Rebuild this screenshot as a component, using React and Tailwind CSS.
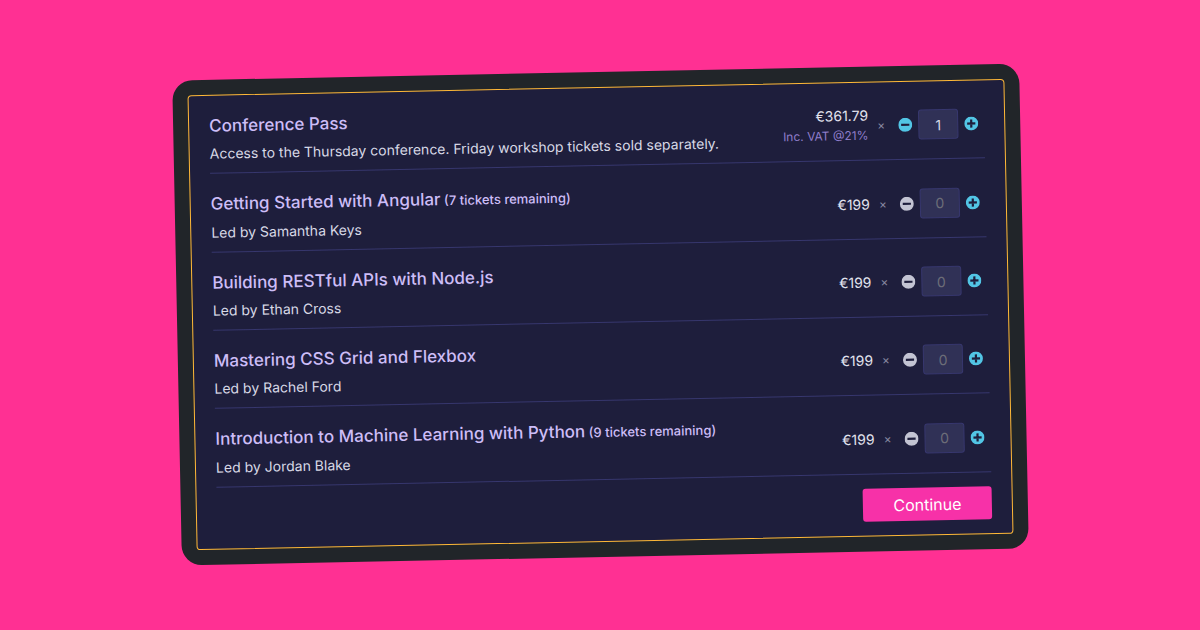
import { useState } from "react";

const TICKETS = [
  {
    id: "conference",
    name: "Conference Pass",
    details: "Access to the Thursday conference. Friday workshop tickets sold separately.",
    price: "€361.79",
    note: "Inc. VAT @21%",
    initial: "1",
  },
  {
    id: "angular",
    name: "Getting Started with Angular",
    remaining: 7,
    details: "Led by Samantha Keys",
    price: "€199",
    initial: "",
  },
  {
    id: "rest",
    name: "Building RESTful APIs with Node.js",
    details: "Led by Ethan Cross",
    price: "€199",
    initial: "",
  },
  {
    id: "css",
    name: "Mastering CSS Grid and Flexbox",
    details: "Led by Rachel Ford",
    price: "€199",
    initial: "",
  },
  {
    id: "python",
    name: "Introduction to Machine Learning with Python",
    remaining: 9,
    details: "Led by Jordan Blake",
    price: "€199",
    initial: "",
  },
];

function RoundIcon({ plus }) {
  return (
    <svg viewBox="0 0 14 14" className="block size-3.5" aria-hidden="true">
      <circle cx="7" cy="7" r="7" fill="currentColor" />
      <path
        d={plus ? "M2.9 7h8.2M7 2.9v8.2" : "M2.9 7h8.2"}
        stroke="#1e1e3c"
        strokeWidth="2.2"
      />
    </svg>
  );
}

function TicketRow({ ticket }) {
  const [quantity, setQuantity] = useState(ticket.initial);
  const count = Number(quantity) || 0;

  return (
    <li className="flex items-center border-b border-[#37376e] pt-[18px] pr-1.5 pb-[9px]">
      <div className="min-w-0 flex-1">
        <label htmlFor={ticket.id} className="block text-[17px] leading-6 font-medium text-[#cdbdf7]">
          {ticket.name}
          {ticket.remaining && (
            <span className="text-[13px]"> ({ticket.remaining} tickets remaining)</span>
          )}
        </label>
        <p className="mt-1.5 text-sm leading-5 text-[#d8d9e6]">{ticket.details}</p>
      </div>
      <div className="text-right leading-5">
        <p className="text-sm leading-5 text-[#e2e3ee]">{ticket.price}</p>
        {ticket.note && <p className="text-xs leading-5 text-[#8f7dcb]">{ticket.note}</p>}
      </div>
      <span className="w-[30px] pr-1 text-center text-xs text-[#85869f]">×</span>
      <div className="flex items-center gap-1.5">
        <button
          type="button"
          aria-label={`Remove one ${ticket.name}`}
          disabled={count === 0}
          onClick={() => setQuantity(count > 1 ? String(count - 1) : "")}
          className="text-[#52c5e5] disabled:text-[#c3c4d3]"
        >
          <RoundIcon />
        </button>
        <input
          id={ticket.id}
          type="text"
          inputMode="numeric"
          placeholder="0"
          value={quantity}
          onChange={(event) => setQuantity(event.target.value)}
          className="h-[30px] w-10 rounded-[3px] border border-[#37376e] bg-[#303156] text-center text-sm text-[#d8d9e6] placeholder:text-[#6c6d78]"
        />
        <button
          type="button"
          aria-label={`Add one ${ticket.name}`}
          onClick={() => setQuantity(String(count + 1))}
          className="text-[#52c5e5]"
        >
          <RoundIcon plus />
        </button>
      </div>
    </li>
  );
}

export default function App() {
  return (
    <main className="flex min-h-screen items-center justify-center overflow-hidden bg-[#ff3093] pb-0.5 font-['Inter','Liberation_Sans',sans-serif]">
      <div className="w-full max-w-[847px] rotate-[-1.15deg] rounded-[20px] bg-[#212529] p-[15px]">
        <form
          onSubmit={(event) => event.preventDefault()}
          className="rounded-[4px] border border-[#ffb938] bg-[#1e1e3c] px-5 pb-3.5"
        >
          <ul>
            {TICKETS.map((ticket) => (
              <TicketRow key={ticket.id} ticket={ticket} />
            ))}
          </ul>
          <div className="mt-3.5 flex justify-end">
            <button
              type="submit"
              className="h-[33px] w-[129px] rounded-[3px] bg-[#f731a8] text-base text-white"
            >
              Continue
            </button>
          </div>
        </form>
      </div>
    </main>
  );
}
